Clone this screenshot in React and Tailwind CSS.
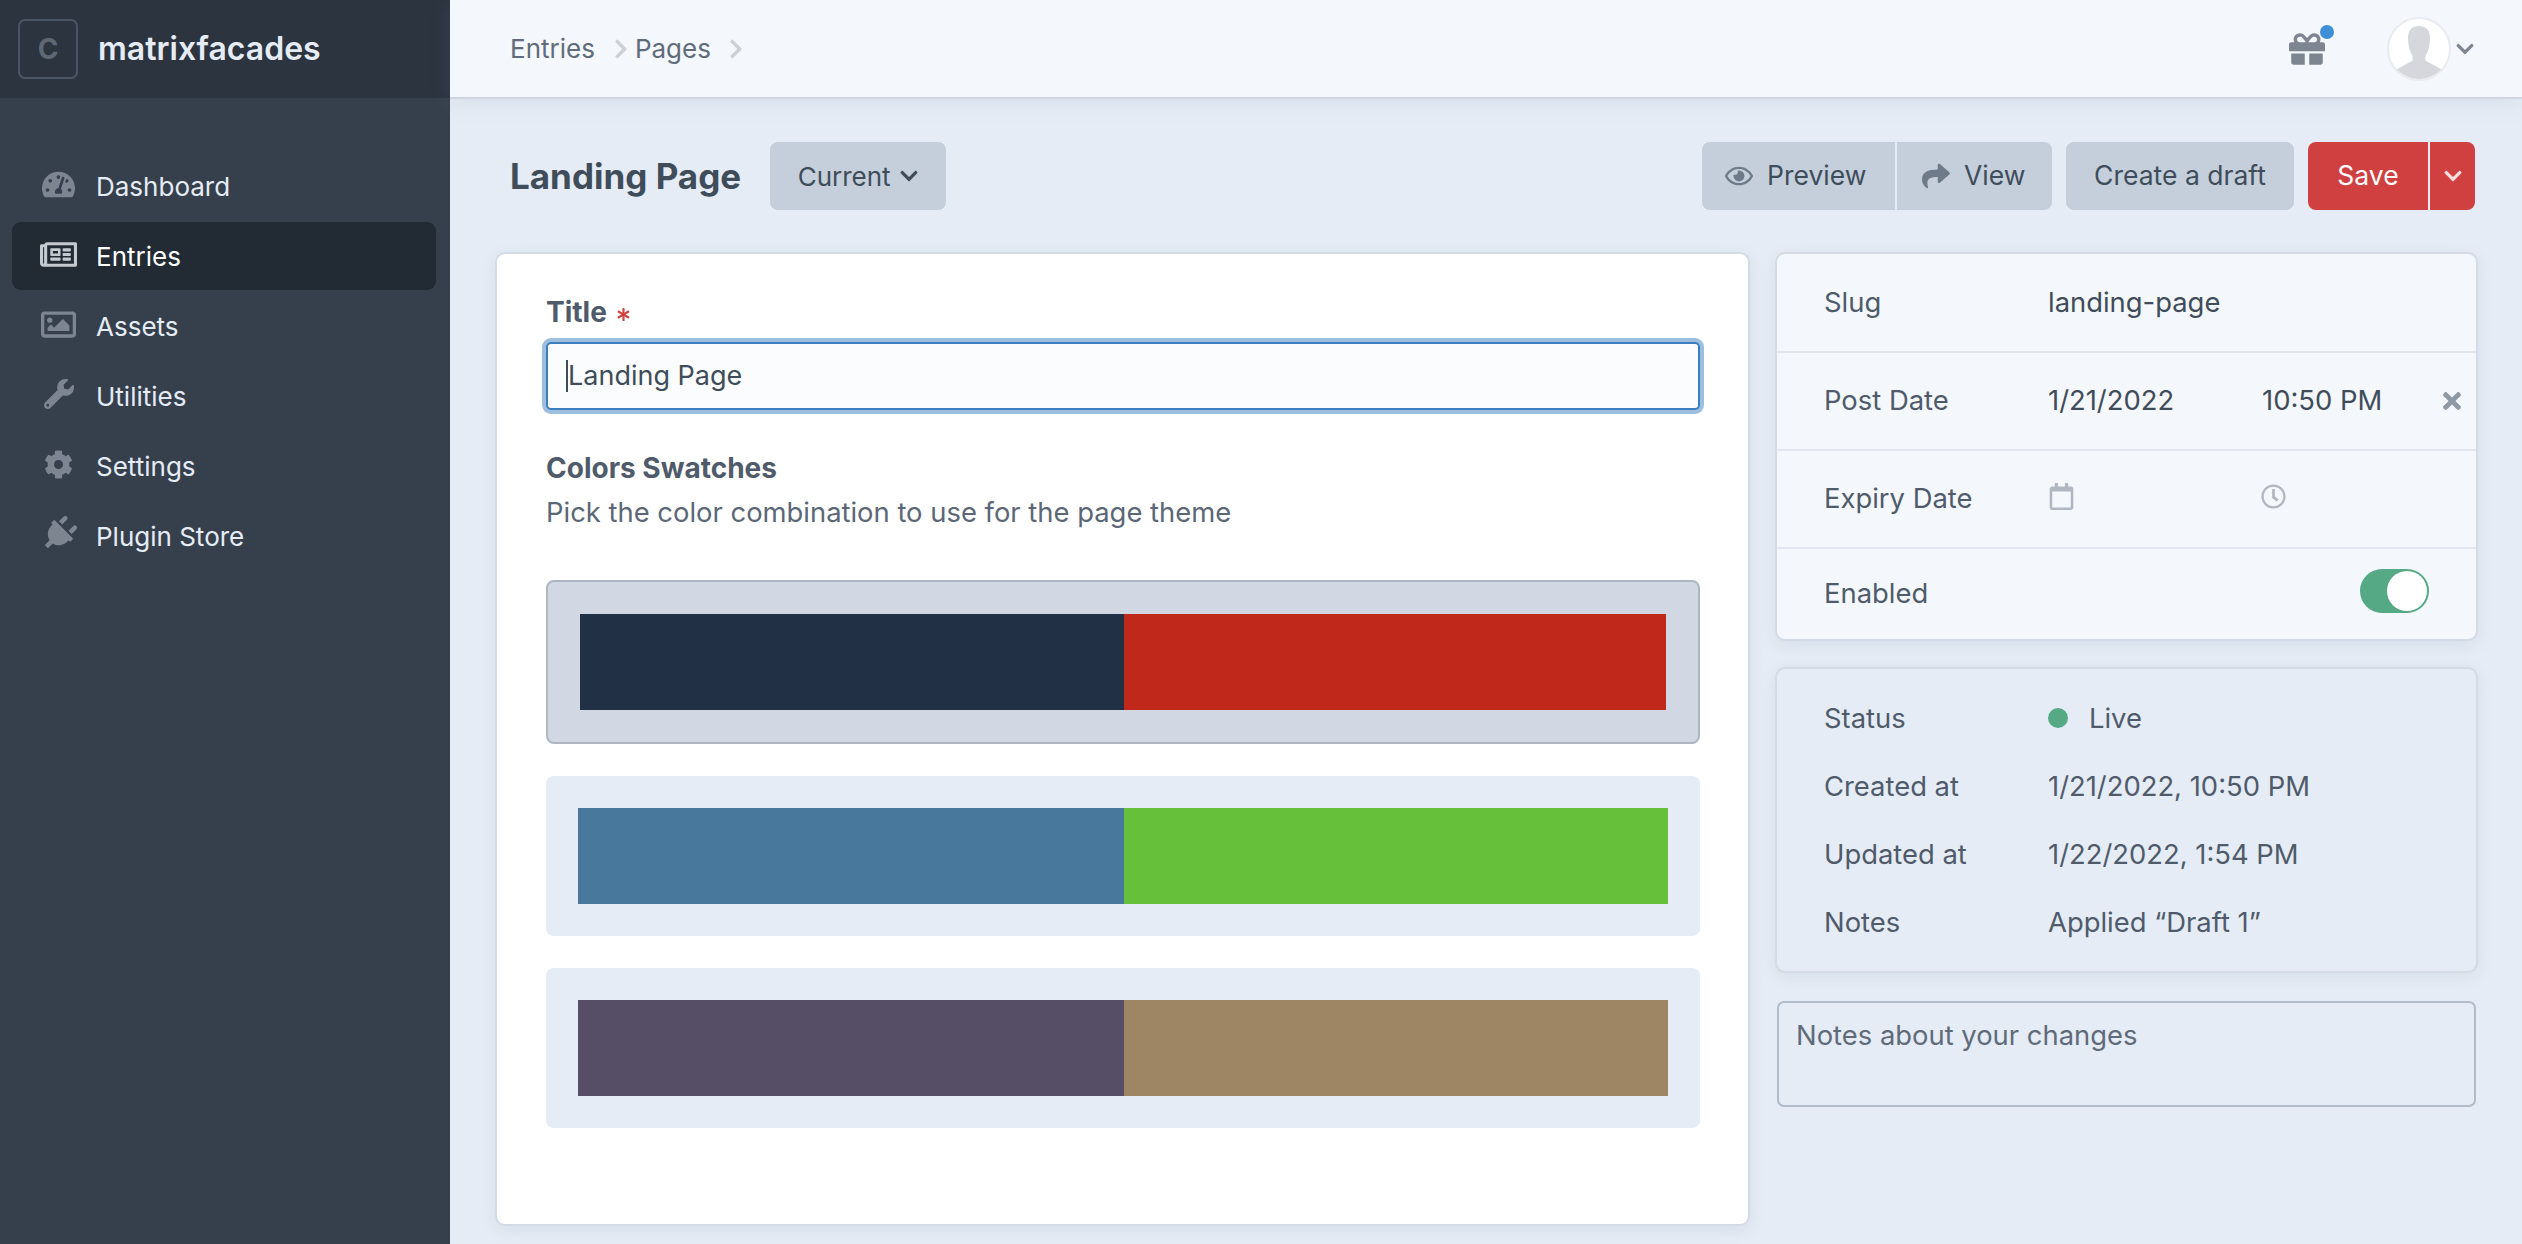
import { FaAsterisk, FaChevronDown, FaChevronRight, FaCog, FaGift, FaPlug, FaRegCalendar, FaRegClock, FaRegEye, FaRegImage, FaRegNewspaper, FaShare, FaTachometerAlt, FaTimes, FaWrench } from "react-icons/fa";

const navItems = [
  { label: "Dashboard", icon: FaTachometerAlt, size: 33 },
  { label: "Entries", icon: FaRegNewspaper, size: 37, active: true },
  { label: "Assets", icon: FaRegImage, size: 35 },
  { label: "Utilities", icon: FaWrench, size: 30 },
  { label: "Settings", icon: FaCog, size: 29 },
  { label: "Plugin Store", icon: FaPlug, size: 36, tilted: true },
];

const swatches = [
  { left: "bg-[#213044]", right: "bg-[#bf281a]", selected: true },
  { left: "bg-[#48789c]", right: "bg-[#66c03a]" },
  { left: "bg-[#564e66]", right: "bg-[#9e8563]" },
];

const meta = [
  ["Created at", "1/21/2022, 10:50 PM"],
  ["Updated at", "1/22/2022, 1:54 PM"],
  ["Notes", "Applied “Draft 1”"],
];

function Sidebar() {
  return (
    <aside className="w-[450px] shrink-0 bg-[#36404d]">
      <div className="flex h-[98px] items-center bg-[#2c343f] pl-[18px]">
        <div className="flex h-[60px] w-[60px] items-center justify-center rounded-[7px] border-2 border-[#4b5664] text-[28px] font-bold text-[#5d6874]">
          C
        </div>
        <span className="ml-[20px] text-[32px] font-semibold text-[#e5ecf6]">matrixfacades</span>
      </div>
      <nav className="ml-[12px] mr-[14px] mt-[54px] flex flex-col gap-[2px]">
        {navItems.map(({ label, icon: Icon, size, active, tilted }) => (
          <div
            key={label}
            className={`flex h-[68px] items-center rounded-[9px] pl-[28px] text-[26px] ${active ? "bg-[#222a33] text-white" : "text-[#e5ecf6]"}`}
          >
            <span className={`mb-[4px] flex w-[37px] justify-center ${active ? "text-[#c5cad0]" : "text-[#7c8590]"}`}>
              <Icon size={size} className={tilted ? "rotate-45" : ""} />
            </span>
            <span className="ml-[19px]">{label}</span>
          </div>
        ))}
      </nav>
    </aside>
  );
}

function TopBar() {
  return (
    <header className="flex h-[99px] shrink-0 items-center border-b-2 border-[#cdd6e2] bg-[#f4f7fc] pl-[60px] pr-[47px] text-[26px] text-[#5f6c7b] shadow-[0_4px_20px_rgba(130,150,180,0.14)]">
      <span>Entries</span>
      <FaChevronRight size={22} className="ml-[15px] mr-[3px] text-[#cdd1d6]" />
      <span>Pages</span>
      <FaChevronRight size={22} className="ml-[14px] mr-[3px] text-[#cdd1d6]" />
      <div className="ml-auto flex items-center">
        <div className="relative text-[#7c8590]">
          <FaGift size={36} />
          <span className="absolute -right-[9px] -top-[6px] h-[14px] w-[14px] rounded-full bg-[#3f8fd6]" />
        </div>
        <div className="ml-[62px] flex h-[64px] w-[64px] items-end justify-center overflow-hidden rounded-full border-2 border-[#e8ebf0] bg-white">
          <svg viewBox="0 0 60 60" className="h-[60px] w-[60px] text-[#d5d7dc]" fill="currentColor">
            <path d="M30 7c-8 0-11 5-11 12 0 6 1 12 4 17 1 2 1 5 0 6l-13 7c-3 2-5 4-6 7 5 3 16 4 26 4s21-1 26-4c-1-3-3-5-6-7l-13-7c-1-1-1-4 0-6 3-5 4-11 4-17 0-7-3-12-11-12z" />
          </svg>
        </div>
        <FaChevronDown size={20} className="ml-[4px] text-[#7c8590]" />
      </div>
    </header>
  );
}

function PageHead() {
  return (
    <div className="mt-[43px] flex h-[68px] items-center pl-[60px] pr-[47px] text-[26px] text-[#3f4c5a]">
      <h1 className="text-[35px] font-bold">Landing Page</h1>
      <button className="ml-[29px] flex h-[68px] w-[176px] items-center justify-center gap-[8px] rounded-[8px] bg-[#c4cfdb]">
        Current
        <FaChevronDown size={20} />
      </button>
      <div className="ml-auto flex h-[68px] items-stretch gap-[14px] text-[26.5px]">
        <div className="flex overflow-hidden rounded-[8px] bg-[#c4cfdb]">
          <button className="flex w-[193px] items-center gap-[14px] pl-[23px]">
            <FaRegEye size={28} className="text-[#6f7b88]" />
            Preview
          </button>
          <button className="flex w-[157px] items-center gap-[14px] border-l-2 border-[#e5ecf5] pl-[25px]">
            <FaShare size={28} className="text-[#6f7b88]" />
            View
          </button>
        </div>
        <button className="w-[228px] rounded-[8px] bg-[#c4cfdb]">Create a draft</button>
        <div className="flex overflow-hidden rounded-[8px] bg-[#d04040] text-white">
          <button className="w-[120px]">Save</button>
          <button className="flex w-[47px] items-center justify-center border-l-2 border-[#e5ecf5]">
            <FaChevronDown size={20} className="text-[#f6dede]" />
          </button>
        </div>
      </div>
    </div>
  );
}

function MainCard() {
  return (
    <section className="h-[974px] w-[1255px] rounded-[10px] border-2 border-[#d3dbe6] bg-white pl-[49px] pt-[40px] shadow-[0_4px_16px_rgba(120,140,170,0.14)]">
      <div className="flex h-[36px] items-center text-[28px] font-bold text-[#4f5b6b]">
        Title
        <FaAsterisk size={13} className="ml-[10px] mt-[4px] text-[#d04040]" />
      </div>
      <div className="mt-[12px] flex h-[68px] w-[1154px] items-center rounded-[5px] border-2 border-[#3c7ebc] bg-[#fbfcfe] pl-[18px] text-[27px] text-[#3f4c5a] ring-4 ring-[#9dbfdf]">
        <span className="border-l-2 border-[#3f4c5a] leading-[32px]">Landing Page</span>
      </div>
      <div className="mt-[40px] text-[28px] font-bold leading-[36px] text-[#4f5b6b]">Colors Swatches</div>
      <div className="mt-[8px] text-[27.4px] leading-[36px] text-[#5b6776]">Pick the color combination to use for the page theme</div>
      <div className="mt-[50px] flex w-[1154px] flex-col gap-[32px]">
        {swatches.map((s) => (
          <div
            key={s.left}
            className={`flex items-center justify-center rounded-[8px] ${s.selected ? "h-[164px] border-2 border-[#aeb6c2] bg-[#d1d8e3]" : "h-[160px] bg-[#e5ecf5]"}`}
          >
            <div className={`flex h-[96px] ${s.selected ? "w-[1086px]" : "w-[1090px]"}`}>
              <div className={`${s.selected ? "w-[544px]" : "w-[546px]"} ${s.left}`} />
              <div className={`flex-1 ${s.right}`} />
            </div>
          </div>
        ))}
      </div>
    </section>
  );
}

function SideColumn() {
  return (
    <div className="flex w-[703px] flex-col text-[27.4px] text-[#4f5b6b]">
      <div className="h-[389px] overflow-hidden rounded-[10px] border-2 border-[#d3dbe6] bg-[#f4f7fc] shadow-[0_4px_16px_rgba(120,140,170,0.14)]">
        <div className="flex h-[97px] items-center pl-[47px]">
          <span className="w-[224px]">Slug</span>
          <span className="text-[#3f4c5a]">landing-page</span>
        </div>
        <div className="flex h-[98px] items-center border-t-2 border-[#e1e6ee] pl-[47px] pr-[11px]">
          <span className="w-[224px]">Post Date</span>
          <span className="w-[214px] text-[#3f4c5a]">1/21/2022</span>
          <span className="text-[#3f4c5a]">10:50 PM</span>
          <FaTimes size={26} className="ml-auto text-[#8f99a5]" />
        </div>
        <div className="flex h-[98px] items-center border-t-2 border-[#e1e6ee] pl-[47px]">
          <span className="w-[224px]">Expiry Date</span>
          <span className="mb-[5px] w-[213px] text-[#b1b7c1]">
            <FaRegCalendar size={27} />
          </span>
          <FaRegClock size={25} className="mb-[5px] text-[#b1b7c1]" />
        </div>
        <div className="flex h-[92px] items-center border-t-2 border-[#e1e6ee] pl-[47px] pr-[47px]">
          <span>Enabled</span>
          <span className="mb-[6px] ml-auto flex h-[44px] w-[69px] items-center justify-end rounded-full bg-[#55a985] pr-[2px]">
            <span className="h-[40px] w-[40px] rounded-full bg-white" />
          </span>
        </div>
      </div>
      <div className="mt-[26px] flex h-[306px] flex-col justify-center gap-[32px] rounded-[10px] border-2 border-[#d3dbe6] bg-[#e5ecf5] pl-[47px] leading-[36px] shadow-[0_4px_16px_rgba(120,140,170,0.14)]">
        <div className="flex">
          <span className="w-[224px]">Status</span>
          <span className="flex items-center">
            <span className="h-[20px] w-[20px] rounded-full bg-[#55a985]" />
            <span className="ml-[21px]">Live</span>
          </span>
        </div>
        {meta.map(([label, value]) => (
          <div key={label} className="flex">
            <span className="w-[224px]">{label}</span>
            <span>{value}</span>
          </div>
        ))}
      </div>
      <div className="mx-[2px] mt-[28px] h-[106px] rounded-[7px] border-2 border-[#b0bccc] pl-[17px] pt-[14px] leading-[36px] text-[#5f6b7a]">
        Notes about your changes
      </div>
    </div>
  );
}

export default function App() {
  return (
    <div className="flex h-[1244px] overflow-hidden bg-[#e5ecf5] font-['Inter',sans-serif] antialiased">
      <Sidebar />
      <main className="flex min-w-0 flex-1 flex-col">
        <TopBar />
        <PageHead />
        <div className="mt-[42px] flex items-start gap-[25px] pl-[45px]">
          <MainCard />
          <SideColumn />
        </div>
      </main>
    </div>
  );
}
